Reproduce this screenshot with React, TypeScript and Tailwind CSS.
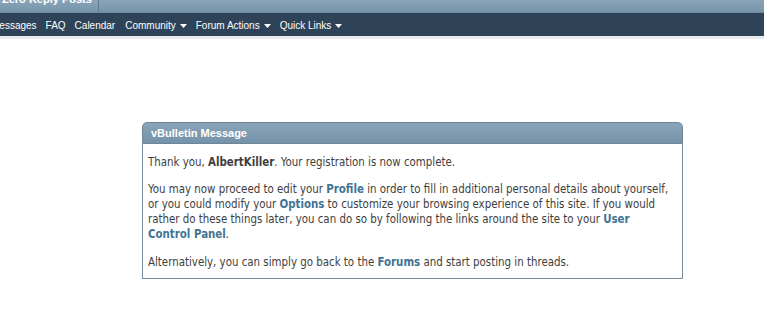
import React from "react";

function Caret() {
  return (
    <svg width="7" height="4" viewBox="0 0 7 4" className="ml-[4px]">
      <path d="M0 0 L7 0 L3.5 4 Z" fill="#ffffff" />
    </svg>
  );
}

export default function App() {
  const navFont = { fontFamily: '"Liberation Sans", Arial, sans-serif' };
  const bodyFont = { fontFamily: '"DejaVu Sans Condensed", "DejaVu Sans", Tahoma, sans-serif' };
  return (
    <div className="w-[764px] h-[329px] bg-white overflow-hidden" style={navFont}>
      <div className="h-[13px] bg-gradient-to-b from-[#8aa4b8] to-[#7794aa] flex items-end border-b border-[#6f889c]">
        <div className="w-[99px] h-[13px] border-r border-[#5f788c] overflow-hidden relative">
          <span className="absolute left-[2px] top-[-6px] text-[11px] leading-[13px] font-bold text-white whitespace-nowrap">Zero Reply Posts</span>
        </div>
      </div>
      <div className="h-[23px] bg-[#2e4358] flex items-center pt-[2px] text-white text-[10px] whitespace-nowrap">
        <span className="ml-[-9px]">Messages</span>
        <span className="ml-[9px]">FAQ</span>
        <span className="ml-[9px]">Calendar</span>
        <span className="ml-[10px] flex items-center">Community<Caret /></span>
        <span className="ml-[9px] flex items-center">Forum Actions<Caret /></span>
        <span className="ml-[9px] flex items-center">Quick Links<Caret /></span>
      </div>
      <div className="h-[3px] bg-[#e7e9ed]" />
      <div className="flex pt-[83px] pl-[142px]">
        <div className="w-[541px]">
          <div className="h-[22px] rounded-t-[5px] bg-gradient-to-b from-[#8aa5b9] to-[#7592a9] border border-[#6e8699] flex items-center pl-[8px] text-white text-[11px] font-bold">
            vBulletin Message
          </div>
          <div className="border border-t-0 border-[#7d8f9e] pl-[5px] pr-[10px] pt-[11px] pb-[8px] text-[11.4px] leading-[15px] text-[#3e3e3e]" style={bodyFont}>
            <p>
              Thank you, <b className="font-bold">AlbertKiller</b>. Your registration is now complete.
            </p>
            <p className="mt-[12px]">
              You may now proceed to edit your <b className="text-[#417394]">Profile</b> in order to fill in additional personal details about yourself, or you could modify your <b className="text-[#417394]">Options</b> to customize your browsing experience of this site. If you would rather do these things later, you can do so by following the links around the site to your <b className="text-[#417394]">User Control Panel</b>.
            </p>
            <p className="mt-[13px]">
              Alternatively, you can simply go back to the <b className="text-[#417394]">Forums</b> and start posting in threads.
            </p>
          </div>
        </div>
      </div>
    </div>
  );
}
